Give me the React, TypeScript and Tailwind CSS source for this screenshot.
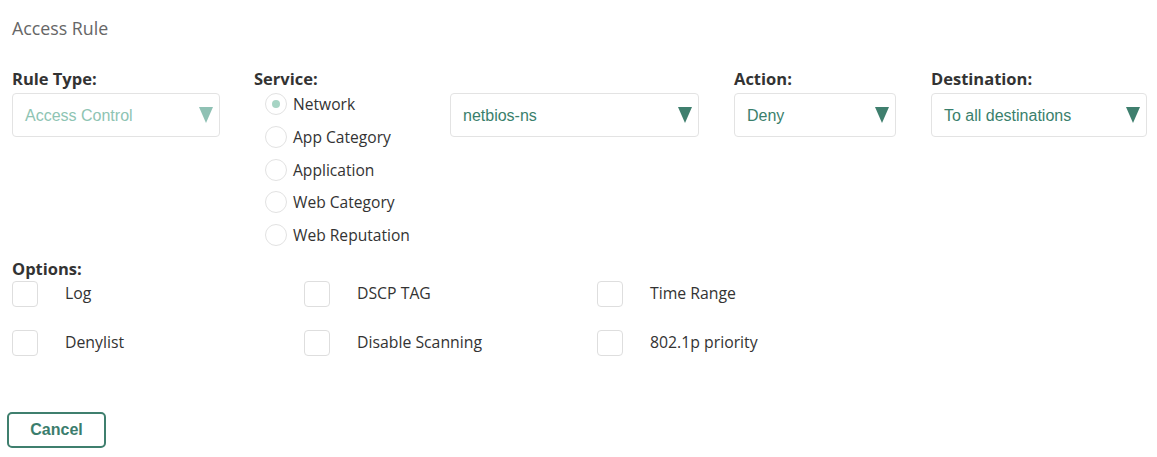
const labelFont = "font-['Open_Sans',sans-serif]";
const selectFont = "font-['Liberation_Sans',Arial,sans-serif]";

type SelectProps = { value: string; width: string; disabled?: boolean };

const Select = ({ value, width, disabled }: SelectProps) => (
    <div className={`${width} h-[44px] flex items-center justify-between pl-3 pr-[6px] border border-[#e3e3e3] rounded-[4px] bg-white ${selectFont} text-[16px] ${disabled ? "text-[#8ec4b3]" : "text-[#3a7f6c]"}`}>
        <span className="pt-[1px]">{value}</span>
        <svg width="14" height="16" viewBox="0 0 14 16">
            <polygon points="0,0 14,0 7,16" fill={disabled ? "#8fc1b4" : "#3f7f6e"} />
        </svg>
    </div>
)

const Label = ({ text }: { text: string }) => (
    <div className={`${labelFont} font-bold text-[16.5px] leading-[22px] text-[#333]`}>{text}</div>
)

const services = ["Network", "App Category", "Application", "Web Category", "Web Reputation"]

const options = ["Log", "DSCP TAG", "Time Range", "Denylist", "Disable Scanning", "802.1p priority"]

const App = () => {
    return (
        <div className="bg-white w-[1157px] h-[457px] pl-3 pt-[16px]">
            <div className={`${labelFont} text-[17.8px] leading-[24px] text-[#666]`}>Access Rule</div>

            <div className="flex mt-[28px]">
                <div className="w-[208px]">
                    <Label text="Rule Type:" />
                    <div className="mt-[3px]">
                        <Select value="Access Control" width="w-[208px]" disabled />
                    </div>
                </div>

                <div className="ml-[34px] w-[196px]">
                    <Label text="Service:" />
                    <div className="mt-[3px] flex flex-col">
                        {services.map((s, i) => (
                            <div key={s} className="h-[32.75px] flex items-start ml-[11px]">
                                <div className="w-[22px] h-[22px] rounded-full border border-[#e2e2e2] flex items-center justify-center">
                                    {i === 0 && <div className="w-[8px] h-[8px] rounded-full bg-[#a6d4c4]" />}
                                </div>
                                <span className={`ml-[6px] ${labelFont} text-[15.6px] leading-[22px] text-[#333]`}>{s}</span>
                            </div>
                        ))}
                    </div>
                </div>

                <div className="mt-[25px]">
                    <Select value="netbios-ns" width="w-[249px]" />
                </div>

                <div className="ml-[35px]">
                    <Label text="Action:" />
                    <div className="mt-[3px]">
                        <Select value="Deny" width="w-[162px]" />
                    </div>
                </div>

                <div className="ml-[35px]">
                    <Label text="Destination:" />
                    <div className="mt-[3px]">
                        <Select value="To all destinations" width="w-[216px]" />
                    </div>
                </div>
            </div>

            <div className="mt-[1px]">
                <Label text="Options:" />
                <div className="grid grid-cols-[292px_293px_292px] mt-[1px]">
                    {options.map((o, i) => (
                        <div key={o} className={`flex items-center h-[26px] ${i >= 3 ? "mt-[23px]" : ""}`}>
                            <div className="w-[26px] h-[26px] rounded-[4px] border border-[#dedede] bg-white" />
                            <span className={`ml-[27px] ${labelFont} text-[15.8px] pt-[1px] text-[#333]`}>{o}</span>
                        </div>
                    ))}
                </div>
            </div>

            <button className={`mt-[56px] -ml-[5px] w-[99px] h-[36px] border-2 border-[#3f7f6e] rounded-[5px] bg-white ${selectFont} font-bold text-[16px] text-[#3b7d6d]`}>
                Cancel
            </button>
        </div>
    )
}

export default App;
